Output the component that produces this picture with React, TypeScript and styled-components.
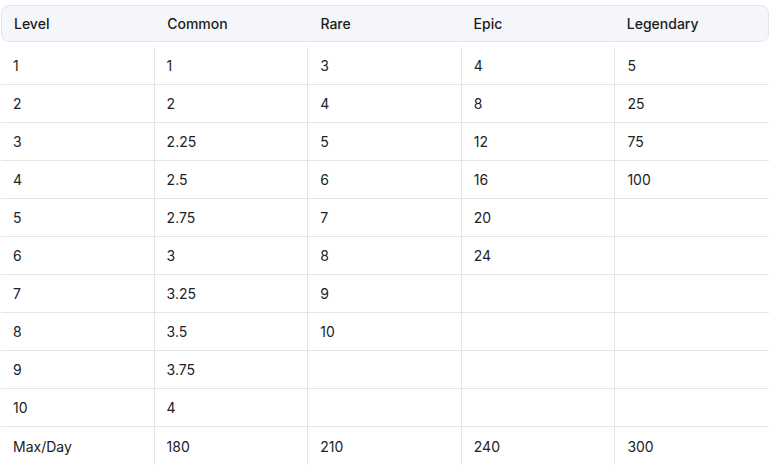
import React from "react";
import styled, { createGlobalStyle } from "styled-components";

const Global = createGlobalStyle`
  html, body { margin: 0; padding: 0; background: #ffffff; }
  body { font-family: Inter, "Noto Sans", sans-serif; }
`;

const Wrap = styled.div`
  padding: 5px 7px 0 1px;
  width: 768px;
`;

const Head = styled.div`
  display: grid;
  grid-template-columns: repeat(5, 1fr);
  height: 37px;
  box-sizing: border-box;
  border: 1px solid #e3e5ec;
  border-radius: 8px;
  background: #f5f6f9;
  margin-bottom: 5px;
`;

const HeadCell = styled.div`
  display: flex;
  align-items: center;
  padding-left: 12px;
  font-size: 14px;
  font-weight: 500;
  color: #1b1d21;
`;

const Row = styled.div<{ $last?: boolean }>`
  display: grid;
  grid-template-columns: repeat(5, 1fr);
  height: 38px;
  box-sizing: border-box;
  border-bottom: ${(p) => (p.$last ? "none" : "1px solid #e4e5ec")};
`;

const Cell = styled.div<{ $edge?: boolean }>`
  display: flex;
  align-items: center;
  padding-left: 12px;
  font-size: 14px;
  color: #202226;
  box-sizing: border-box;
  border-right: ${(p) => (p.$edge ? "none" : "1px solid #e4e5ec")};
`;

const headers = ["Level", "Common", "Rare", "Epic", "Legendary"];
const rows: string[][] = [
  ["1", "1", "3", "4", "5"],
  ["2", "2", "4", "8", "25"],
  ["3", "2.25", "5", "12", "75"],
  ["4", "2.5", "6", "16", "100"],
  ["5", "2.75", "7", "20", ""],
  ["6", "3", "8", "24", ""],
  ["7", "3.25", "9", "", ""],
  ["8", "3.5", "10", "", ""],
  ["9", "3.75", "", "", ""],
  ["10", "4", "", "", ""],
  ["Max/Day", "180", "210", "240", "300"],
];

export default function App() {
  return (
    <>
      <Global />
      <Wrap>
        <Head>
          {headers.map((h) => (
            <HeadCell key={h}>{h}</HeadCell>
          ))}
        </Head>
        {rows.map((r, i) => (
          <Row key={i} $last={i === rows.length - 1}>
            {r.map((c, j) => (
              <Cell key={j} $edge={j === r.length - 1}>
                {c}
              </Cell>
            ))}
          </Row>
        ))}
      </Wrap>
    </>
  );
}
